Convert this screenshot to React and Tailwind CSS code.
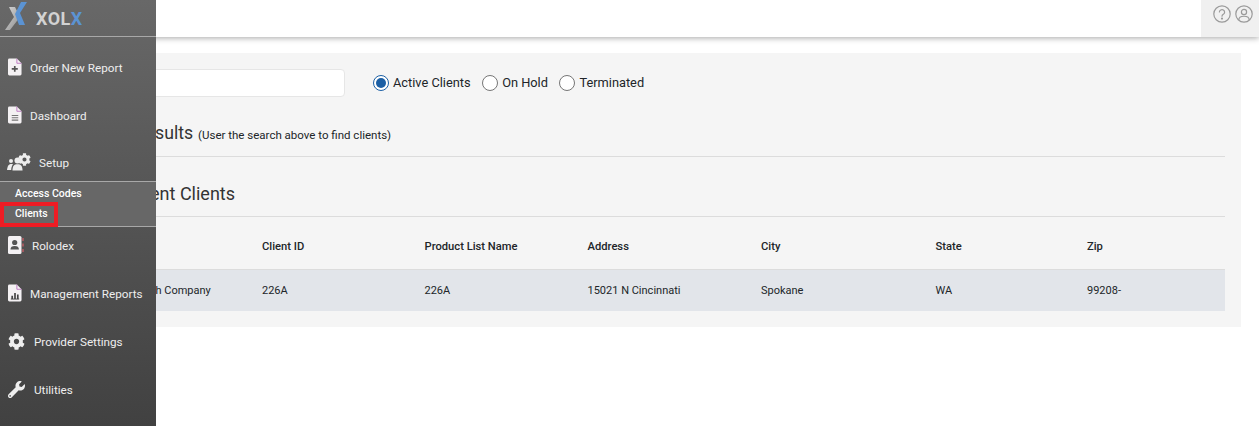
import { FaCog, FaWrench } from 'react-icons/fa'

const fuente = { fontFamily: 'Roboto, sans-serif' }

function Logo() {
    return (
        <svg width="30" height="32" viewBox="0 0 30 32" className="shrink-0">
            <defs>
                <linearGradient id="plata" x1="0" y1="0" x2="1" y2="1">
                    <stop offset="0" stopColor="#d8d8d8" />
                    <stop offset="1" stopColor="#8f8f8f" />
                </linearGradient>
            </defs>
            <path d="M9 5 L15 5 L20 15 L10 28 L5 28 L14 15 Z" fill="url(#plata)" />
            <path d="M21 0 L27 0 L20 11 L25 23 L19 23 L15 12 Z" fill="#5b93d3" />
        </svg>
    )
}

function Documento({ children }) {
    return (
        <svg width="14" height="18" viewBox="0 0 15 19" className="shrink-0">
            <path d="M1.5 0.5 H9.5 L14.5 5.5 V17 a1.5 1.5 0 0 1 -1.5 1.5 H1.5 A1.5 1.5 0 0 1 0 17 V2 A1.5 1.5 0 0 1 1.5 0.5 Z" fill="#f4f1f3" />
            <path d="M9.5 0.5 V5.5 H14.5" fill="none" stroke="#b05ab5" strokeWidth="0.8" />
            {children}
        </svg>
    )
}

function IconoNuevo() {
    return (
        <Documento>
            <path d="M4 11.5 H10.5 M7.25 8.5 V14.5" stroke="#555" strokeWidth="1.8" />
        </Documento>
    )
}

function IconoLista() {
    return (
        <Documento>
            <path d="M4 10 H11 M4 12.5 H11 M4 15 H11" stroke="#777" strokeWidth="1.1" />
        </Documento>
    )
}

function IconoGrafica() {
    return (
        <Documento>
            <path d="M3 16 H12" stroke="#444" strokeWidth="1" />
            <path d="M4.5 16 V12.5 M7.5 16 V9.5 M10.5 16 V11" stroke="#444" strokeWidth="1.8" />
        </Documento>
    )
}

function IconoRolodex() {
    return (
        <svg width="16" height="18" viewBox="0 0 16 18" className="shrink-0">
            <rect x="0" y="0" width="13.5" height="18" rx="1.5" fill="#f4f1f3" />
            <circle cx="6.7" cy="6.5" r="2.6" fill="#555" />
            <path d="M2.5 13.5 a4.2 3.4 0 0 1 8.4 0 Z" fill="#555" />
            <path d="M15 2 V5 M15 7.5 V10.5 M15 13 V16" stroke="#d8606a" strokeWidth="1.2" />
        </svg>
    )
}

function IconoSetup() {
    return (
        <svg width="24" height="18" viewBox="0 0 24 18" fill="#ededed" className="shrink-0">
            <circle cx="4" cy="8" r="2" />
            <path d="M0 17 C0.5 12.5 2 11 4.5 11 L6 11 C4.8 13 4.2 15 4.2 17 Z" />
            <circle cx="10.5" cy="7.5" r="3" />
            <path d="M5.5 17.5 C5.5 13 7 11.2 10.5 11.2 C14 11.2 15.5 13 15.5 17.5 Z" />
            <FaCog x="11" y="0" size={13} />
        </svg>
    )
}

function ItemMenu({ icono, texto, gap = 'gap-[8px]', alto = 'h-12', extra = '' }) {
    return (
        <div className={`flex items-center pl-2 ${gap} ${alto} ${extra} text-[11.7px] text-[#eeeeee]`}>
            {icono}
            <span className="pt-[3px]">{texto}</span>
        </div>
    )
}

function Menu() {
    return (
        <aside className="absolute left-0 top-0 h-[426px] w-[156px] bg-gradient-to-b from-[#686868] to-[#414141]" style={fuente}>
            <div className="flex h-[37px] items-center gap-[6px] border-b border-[#a8a8a8]">
                <Logo />
                <span className="text-[18px] font-bold tracking-[0.5px] text-[#d2d2d2]">
                    XOL<span className="text-[#5b93d3]">X</span>
                </span>
            </div>
            <div className="pt-[6px]">
                <ItemMenu icono={<IconoNuevo />} texto="Order New Report" />
                <ItemMenu icono={<IconoLista />} texto="Dashboard" />
                <ItemMenu
                    icono={<IconoSetup />}
                    texto="Setup"
                    alto="h-[42px]"
                    extra="pt-[4px] !pl-[7px]"
                />
                <div className="flex h-[46px] flex-col border-y border-[#a8a8a8] bg-[#676767] text-[10.5px] font-medium text-white">
                    <div className="flex h-[20px] items-center pl-[15px] pt-[4px]">Access Codes</div>
                    <div className="flex h-[25px] w-[58px] shrink-0 items-center border-4 border-[#ed1c24] pl-[11px]">Clients</div>
                </div>
                <ItemMenu icono={<IconoRolodex />} texto="Rolodex" alto="h-[42px]" extra="pb-[6px]" />
                <ItemMenu icono={<IconoGrafica />} texto="Management Reports" />
                <ItemMenu icono={<FaCog size={17} className="shrink-0" />} texto="Provider Settings" gap="gap-[9px]" />
                <ItemMenu icono={<FaWrench size={17} className="shrink-0" />} texto="Utilities" gap="gap-[9px]" />
            </div>
        </aside>
    )
}

function Radio({ texto, activo = false }) {
    return (
        <label className="flex items-center gap-[4px] text-[12.8px] text-[#212529]">
            {activo ? (
                <span className="flex h-4 w-4 items-center justify-center rounded-full border border-[#1b5fa5] bg-white">
                    <span className="h-[10px] w-[10px] rounded-full bg-[#1b5fa5]" />
                </span>
            ) : (
                <span className="h-4 w-4 rounded-full border border-[#767676] bg-white" />
            )}
            {texto}
        </label>
    )
}

const columnas = 'grid grid-cols-[186px_162.5px_163px_173.5px_174.5px_151.5px_138px] items-center'

export default function App() {
    return (
        <div className="relative h-[426px] w-[1259px] overflow-hidden bg-white" style={fuente}>
            <header className="flex h-[37px] justify-end bg-white shadow-[0_1px_6px_rgba(0,0,0,0.35)]">
                <div className="flex w-[58px] items-start gap-[4px] bg-[#f0f0f0] pl-[12px] pt-[5px]">
                    <svg width="18" height="18" viewBox="0 0 18 18" fill="none" stroke="#9a9a9a" strokeWidth="1.2">
                        <circle cx="9" cy="9" r="8.2" />
                        <path d="M6.4 7 a2.6 2.4 0 1 1 3.9 2.2 c-0.9 0.5 -1.3 1 -1.3 2" strokeLinecap="round" />
                        <circle cx="9" cy="13.6" r="0.5" fill="#9a9a9a" />
                    </svg>
                    <svg width="18" height="18" viewBox="0 0 18 18" fill="none" stroke="#9a9a9a" strokeWidth="1.2">
                        <circle cx="9" cy="9" r="8.2" />
                        <circle cx="9" cy="7" r="2.6" />
                        <path d="M3.8 15 c0 -5 10.4 -5 10.4 0" />
                    </svg>
                </div>
            </header>

            <main className="ml-[60px] mr-[18px] mt-[16px] h-[274px] bg-[#f5f5f5] px-4 pt-4">
                <div className="flex items-center gap-[28px]">
                    <input className="h-7 w-[269px] rounded border border-[#e6e6e6] bg-white" />
                    <div className="flex items-center gap-[11.5px]">
                        <Radio texto="Active Clients" activo />
                        <Radio texto="On Hold" />
                        <Radio texto="Terminated" />
                    </div>
                </div>

                <div className="mt-[23px] flex h-[37px] items-baseline gap-[5px] border-b border-[#dcdcdc] text-[#333]">
                    <h2 className="text-[17.7px] font-normal">Search Results</h2>
                    <span className="text-[11.5px] text-[#212529]">(User the search above to find clients)</span>
                </div>

                <div className="flex h-[60px] items-center border-b border-[#dcdcdc] pl-[44px] pt-[14px] text-lg text-[#333]">
                    Recent Clients
                </div>

                <div className={`${columnas} h-[53px] border-b border-[#dcdcdc] pt-[8px] text-[11.2px] font-medium text-[#212529]`}>
                    <span />
                    <span>Client ID</span>
                    <span>Product List Name</span>
                    <span>Address</span>
                    <span>City</span>
                    <span>State</span>
                    <span>Zip</span>
                </div>
                <div className={`${columnas} h-[41px] bg-[#e2e5ea] pt-[1px] text-[11px] text-[#212529]`}>
                    <span className="pl-[57px]">Smith Company</span>
                    <span>226A</span>
                    <span>226A</span>
                    <span>15021 N Cincinnati</span>
                    <span>Spokane</span>
                    <span>WA</span>
                    <span>99208-</span>
                </div>
            </main>

            <Menu />
        </div>
    )
}
